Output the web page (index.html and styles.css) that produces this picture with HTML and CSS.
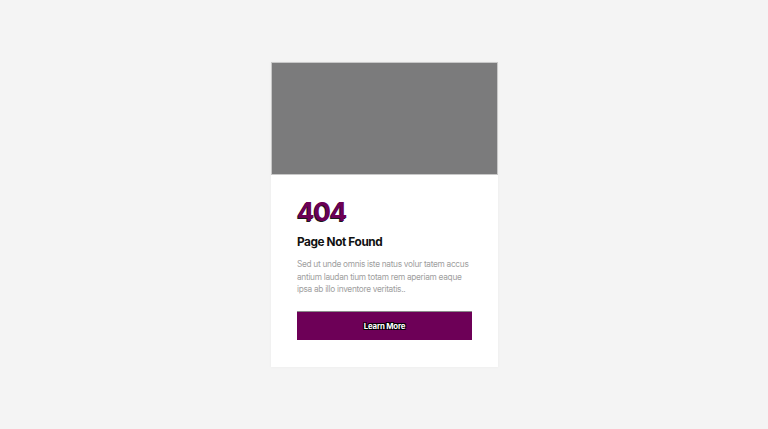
FILE: index.html
```html
<!DOCTYPE html>
<html>
<head>
<meta charset="utf-8">
<link rel="stylesheet" href="styles.css">
</head>
<body>
<div class="page">
  <div class="card">
    <div class="card-image"></div>
    <div class="card-body">
      <div class="code">404</div>
      <h2 class="title">Page Not Found</h2>
      <p class="text">Sed ut unde omnis iste natus volur tatem accus antium laudan tium totam rem aperiam eaque ipsa ab illo inventore veritatis..</p>
      <a class="btn" href="#">Learn More</a>
    </div>
  </div>
</div>
</body>
</html>
```
FILE: styles.css
```css
html, body {
  margin: 0;
  padding: 0;
  background: #f4f4f4;
  font-family: Inter, "Open Sans", sans-serif;
}
.page {
  width: 768px;
  height: 429px;
  display: flex;
  justify-content: center;
  align-items: flex-start;
  padding-top: 62px;
  box-sizing: border-box;
}
.card {
  width: 227px;
  background: #ffffff;
  box-shadow: 0 0 3px rgba(0,0,0,0.04);
  margin-left: 1px;
}
.card-image {
  height: 113px;
  background: #7b7b7c;
  border: 1px solid #c8c8c8;
  box-sizing: border-box;
}
.card-body {
  padding: 22px 26px 27px 26px;
  display: flex;
  flex-direction: column;
}
.code {
  font-size: 26px;
  font-weight: 700;
  line-height: 30px;
  color: #6d0055;
  letter-spacing: -1.2px;
  text-shadow: -1px 1px 0 #1a1a1a;
}
.title {
  margin: 7px 0 0 0;
  font-size: 11.8px;
  line-height: 16px;
  font-weight: 700;
  color: #111111;
  letter-spacing: -0.4px;
}
.text {
  margin: 8px 0 0 0;
  font-size: 8.3px;
  line-height: 12.5px;
  color: #a0a0a0;
  letter-spacing: -0.3px;
}
.btn {
  margin-top: 15px;
  height: 29px;
  background: #6d0057;
  color: #ffffff;
  font-size: 7.8px;
  font-weight: 700;
  letter-spacing: -0.2px;
  text-decoration: none;
  display: flex;
  align-items: center;
  justify-content: center;
  text-shadow: 1px 1px 0 #000, -1px -1px 0 #000, 1px -1px 0 #000, -1px 1px 0 #000;
  border-top: 1px solid #8a8a8a;
  box-sizing: border-box;
}
```
